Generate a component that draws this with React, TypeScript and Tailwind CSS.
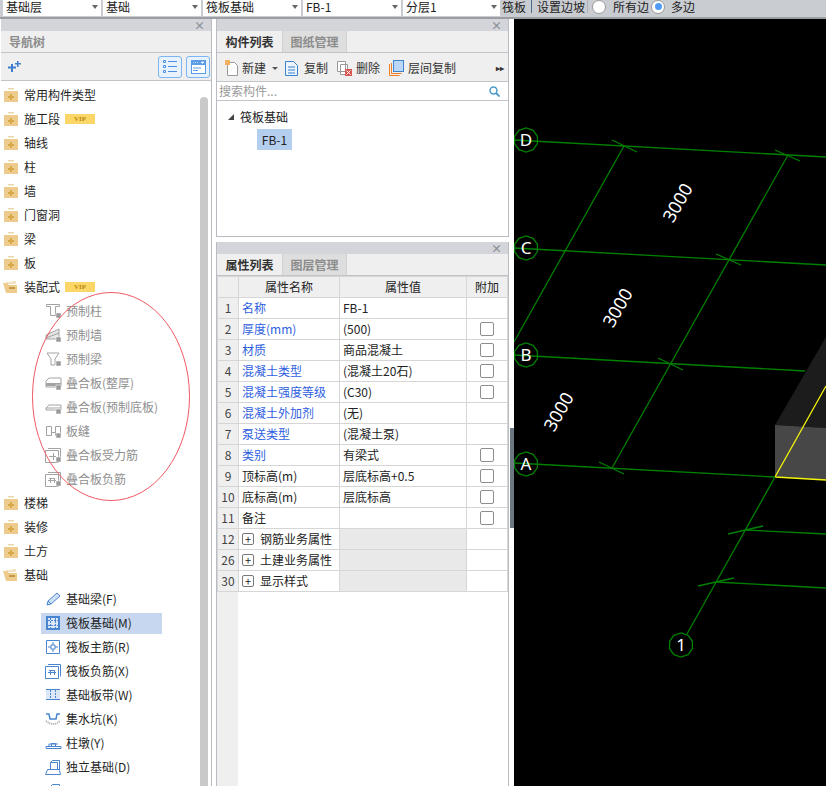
import React from "react";

const FONT = "font-['Noto_Sans_CJK_SC','Noto_Sans',sans-serif]";

type TreeRow = {
  label: string;
  kind: "closed" | "open" | "child";
  icon?: string;
  vip?: boolean;
  disabled?: boolean;
  selected?: boolean;
};

const treeRows: TreeRow[] = [
  { label: "常用构件类型", kind: "closed" },
  { label: "施工段", kind: "closed", vip: true },
  { label: "轴线", kind: "closed" },
  { label: "柱", kind: "closed" },
  { label: "墙", kind: "closed" },
  { label: "门窗洞", kind: "closed" },
  { label: "梁", kind: "closed" },
  { label: "板", kind: "closed" },
  { label: "装配式", kind: "open", vip: true },
  { label: "预制柱", kind: "child", icon: "column", disabled: true },
  { label: "预制墙", kind: "child", icon: "wall", disabled: true },
  { label: "预制梁", kind: "child", icon: "beam", disabled: true },
  { label: "叠合板(整厚)", kind: "child", icon: "slabFull", disabled: true },
  { label: "叠合板(预制底板)", kind: "child", icon: "slab", disabled: true },
  { label: "板缝", kind: "child", icon: "seam", disabled: true },
  { label: "叠合板受力筋", kind: "child", icon: "rebar", disabled: true },
  { label: "叠合板负筋", kind: "child", icon: "negRebar", disabled: true },
  { label: "楼梯", kind: "closed" },
  { label: "装修", kind: "closed" },
  { label: "土方", kind: "closed" },
  { label: "基础", kind: "open" },
  { label: "基础梁(F)", kind: "child", icon: "pencil" },
  { label: "筏板基础(M)", kind: "child", icon: "raft", selected: true },
  { label: "筏板主筋(R)", kind: "child", icon: "mainRebar" },
  { label: "筏板负筋(X)", kind: "child", icon: "negRebar" },
  { label: "基础板带(W)", kind: "child", icon: "strip" },
  { label: "集水坑(K)", kind: "child", icon: "pit" },
  { label: "柱墩(Y)", kind: "child", icon: "pier" },
  { label: "独立基础(D)", kind: "child", icon: "footing" },
  { label: "", kind: "child", icon: "footing" },
];

type PropRow = {
  no: number;
  name: string;
  value?: string;
  blue?: boolean;
  check?: boolean;
  group?: boolean;
};

const propRows: PropRow[] = [
  { no: 1, name: "名称", value: "FB-1", blue: true },
  { no: 2, name: "厚度(mm)", value: "(500)", blue: true, check: true },
  { no: 3, name: "材质", value: "商品混凝土", blue: true, check: true },
  { no: 4, name: "混凝土类型", value: "(混凝土20石)", blue: true, check: true },
  { no: 5, name: "混凝土强度等级", value: "(C30)", blue: true, check: true },
  { no: 6, name: "混凝土外加剂", value: "(无)", blue: true },
  { no: 7, name: "泵送类型", value: "(混凝土泵)", blue: true },
  { no: 8, name: "类别", value: "有梁式", blue: true, check: true },
  { no: 9, name: "顶标高(m)", value: "层底标高+0.5", check: true },
  { no: 10, name: "底标高(m)", value: "层底标高", check: true },
  { no: 11, name: "备注", check: true },
  { no: 12, name: "钢筋业务属性", group: true },
  { no: 26, name: "土建业务属性", group: true },
  { no: 30, name: "显示样式", group: true },
];

function Folder({ open }: { open: boolean }) {
  if (open) {
    return (
      <svg className="-ml-px shrink-0" width="16" height="14" viewBox="0 0 16 14">
        <path d="M3 2h5l1-1h4v3H3z" fill="#f3e3c2" />
        <path d="M0 3h4l2 2h8v8H3z" fill="#eccb8c" />
        <rect x="6" y="7" width="6" height="2" fill="#c39a45" />
      </svg>
    );
  }
  return (
    <svg className="shrink-0" width="14" height="14" viewBox="0 0 14 14">
      <rect x="4" y="0" width="6" height="1.500" fill="#ead6ac" />
      <rect x="0" y="3" width="14" height="11" fill="#eccb8c" />
      <path d="M6 6h2v2h2v2H8v2H6v-2H4V8h2z" fill="#d6a84a" />
    </svg>
  );
}

function ChildIcon({ name, c }: { name: string; c: string }) {
  const s = { fill: "none", stroke: c, strokeWidth: 1 };
  return (
    <svg width="17" height="16" viewBox="0 0 17 16">
      {name === "column" && <path d="M1.500 1.500h13v2H10.500v9h-5v-9H1.500z" {...s} />}
      {name === "wall" && <path d="M1 8l13-6v10H1zM1 11l13-5" {...s} fill="#e6e6e6" />}
      {name === "beam" && <path d="M2 2h12L10 8v6H6V8z" {...s} />}
      {name === "slabFull" && (
        <>
          <path d="M1 6l3-3h12v9H1z" {...s} />
          <rect x="1" y="8" width="15" height="3" fill={c} />
        </>
      )}
      {name === "slab" && <path d="M1 9l3-3h12v5H1zM1 9h15" {...s} />}
      {name === "seam" && <path d="M1.500 3.500h5v9h-5zM10.500 3.500h5v9h-5zM6.500 9.500h4" {...s} />}
      {name === "rebar" && <path d="M.5 3.500h13v12H.5zM3 1.500h12.500v12M4 9.500h7M8.500 6v7" {...s} />}
      {name === "negRebar" && <path d="M.5 3.500h13v12H.5zM3 1.500h12.500v12M4 7.500h6M5.500 7v5M9.500 7v5M3 9.500h8" {...s} />}
      {name === "pencil" && <path d="M2 14l1-4 9-8 3 3-9 8zM3 10l3 3" {...s} fill="#cfe0f5" />}
      {name === "raft" && (
        <>
          <rect x="1" y="1" width="14" height="14" fill={c} />
          <rect x="3" y="3" width="10" height="10" fill="#dce8f7" />
          <path d="M5.500 3v10M10.500 3v10M3 5.500h10M3 10.500h10" {...s} strokeDasharray="2 1" />
        </>
      )}
      {name === "mainRebar" && <path d="M1.500 1.500h13v13h-13zM8 3v3M8 10v3M3 8h3M10 8h3M6 6h4v4H6z" {...s} />}
      {name === "strip" && (
        <>
          <rect x="1" y="2" width="14" height="11" fill="#dce8f7" />
          <path d="M1 2.500h14M1 12.500h14" {...s} />
          <path d="M5.500 3v9M10.500 3v9" {...s} strokeDasharray="2 1" />
        </>
      )}
      {name === "pit" && (
        <>
          <path d="M1 3h3l1 5h6l1-5h3" {...s} strokeWidth={1.5} />
          <path d="M1 10q7 6 14 0" {...s} stroke="#a8a8a8" strokeDasharray="1 1" strokeWidth={2} />
        </>
      )}
      {name === "pier" && <path d="M1 11.500h15v2H1zM6.500 11.500v-3h4v3M4 11V9h9" {...s} />}
      {name === "footing" && <path d="M.5 15.500l2-5h3v-7l2-2h7v10l1 4zM5.500 10.500h9M5.500 3.500h7v7" {...s} />}
      {c === "#a3a3a3" && (
        <rect x="11" y="10" width="5" height="5" fill="#9a9a9a" stroke="#fff" strokeWidth="0.5" />
      )}
    </svg>
  );
}

function NavTree() {
  return (
    <div className="flex min-h-0 flex-1 bg-white">
      <div className="min-w-0 flex-1 overflow-hidden pt-[2px]">
        {treeRows.map((row, i) =>
          row.kind === "child" ? (
            <div key={i} className="flex h-6 items-center pl-10">
              <div
                className={`flex h-[21px] w-[121px] items-center pl-1 ${row.selected ? "bg-[#c6d7ef]" : ""}`}
              >
                <ChildIcon name={row.icon ?? ""} c={row.disabled ? "#a3a3a3" : "#4a86d0"} />
                <span className={`ml-1 whitespace-nowrap text-xs ${row.disabled ? "text-[#8f8f8f]" : "text-[#1f1f1f]"}`}>
                  {row.label}
                </span>
              </div>
            </div>
          ) : (
            <div key={i} className="flex h-6 items-center pl-[3px]">
              <div className="flex w-[15px]">
                <Folder open={row.kind === "open"} />
              </div>
              <span className="ml-[5px] text-xs text-[#1f1f1f]">{row.label}</span>
              {row.vip && (
                <span className="ml-[5px] flex h-[10px] w-[30px] items-center justify-center bg-[#fcd768] font-['Liberation_Serif',serif] text-[7px] font-bold text-[#b98a10]">
                  VIP
                </span>
              )}
            </div>
          ),
        )}
      </div>
      <div className="mr-[3px] mt-4 w-2 rounded-t bg-[#c9c9c9]" />
    </div>
  );
}

function PanelTitle() {
  return (
    <div className="flex h-3 items-center justify-end bg-[#d3d5da] pr-[6px] text-[11px] leading-none font-bold text-[#8d9096]">
      ×
    </div>
  );
}

function Tabs({ active, other }: { active: string; other: string }) {
  return (
    <div className="flex h-[22px] border-b border-[#c2c4ca] bg-[#efefef]">
      <div className="flex w-[65px] items-center justify-center text-xs font-semibold text-[#333]">{active}</div>
      <div className="flex w-[65px] items-center justify-center border-x border-[#d0d0d0] bg-[#dedede] text-xs font-semibold text-[#8c8c8c]">
        {other}
      </div>
    </div>
  );
}

function Toolbar() {
  return (
    <div className="flex h-[29px] items-center border-b border-[#c2c4ca] bg-[#efefef] pl-[7px] pr-[3px] pt-[2px] text-xs text-[#333]">
      <svg width="16" height="16" viewBox="0 0 16 16">
        <path d="M3.500 2.500h7l3 3v10h-10z" fill="#fff" stroke="#9a9a9a" />
        <rect x="1" y="0" width="5" height="5" fill="#f4b060" />
      </svg>
      <span className="ml-[2px]">新建</span>
      <span className="ml-[6px] mt-[1px] h-0 w-0 border-x-[3px] border-t-[3px] border-x-transparent border-t-[#555]" />
      <svg className="ml-[7px]" width="13" height="16" viewBox="0 0 13 16">
        <path d="M.5 1.500h8l4 4v10H.5zM3 7h7M3 10h7M3 13h7" fill="#eef4fc" stroke="#3b82cf" />
      </svg>
      <span className="ml-[6px]">复制</span>
      <svg className="ml-[9px]" width="15" height="16" viewBox="0 0 15 16">
        <path d="M.5 1.500h8v10h-8zM3.500 4.500h7v10h-7z" fill="#fff" stroke="#9a9a9a" />
        <rect x="8" y="9" width="7" height="7" fill="#d9534f" />
        <path d="M9.500 10.500l4 4M13.500 10.500l-4 4" stroke="#fff" />
      </svg>
      <span className="ml-[4px]">删除</span>
      <svg className="ml-[9px]" width="15" height="16" viewBox="0 0 15 16">
        <path d="M.5 4v11.500h10" fill="none" stroke="#ef7d22" />
        <path d="M2.500 3v10.500h10" fill="none" stroke="#ef7d22" />
        <rect x="4.500" y=".5" width="10" height="11" fill="#bcd6f7" stroke="#3b82cf" />
      </svg>
      <span className="ml-[4px]">层间复制</span>
      <span className="ml-auto mr-[1px] text-[8px] font-bold text-[#333]">▸▸</span>
    </div>
  );
}

function Cell({ className, children }: { className: string; children?: React.ReactNode }) {
  return <td className={`border border-[#d6d6d6] p-0 ${className}`}>{children}</td>;
}

function PropTable() {
  return (
    <div className="relative min-h-0 flex-1 bg-white">
      <div className="absolute bottom-0 left-0 top-0 w-[21px] bg-[#efefef]" />
      <table className="relative w-[290px] table-fixed border-collapse text-xs text-[#222]">
        <colgroup>
          <col className="w-[21px]" />
          <col className="w-[101px]" />
          <col className="w-[127px]" />
          <col className="w-[41px]" />
        </colgroup>
        <tbody>
          <tr className="h-[21px] bg-[#efefef] text-center">
            <Cell className="" />
            <Cell className="">属性名称</Cell>
            <Cell className="">属性值</Cell>
            <Cell className="">附加</Cell>
          </tr>
          {propRows.map((row) => (
            <tr key={row.no} className="h-[21px]">
              <Cell className="bg-[#efefef] text-center text-[#444]">{row.no}</Cell>
              <Cell className={`pl-[3px] whitespace-nowrap ${row.blue ? "text-[#2f5fe0]" : ""}`}>
                {row.group ? (
                  <span className="flex items-center">
                    <span className="flex h-[12px] w-[12px] items-center justify-center rounded-[2px] border border-[#777] text-[11px] leading-none">
                      +
                    </span>
                    <span className="ml-[6px]">{row.name}</span>
                  </span>
                ) : (
                  row.name
                )}
              </Cell>
              <Cell className={`pl-[3px] ${row.group ? "bg-[#e9e9e9]" : ""}`}>{row.value}</Cell>
              <Cell className="">
                {row.check && <div className="mx-auto h-[14px] w-[14px] rounded-[2px] border border-[#8d8d8d] bg-white" />}
              </Cell>
            </tr>
          ))}
        </tbody>
      </table>
    </div>
  );
}

function Dropdown({ label, w }: { label: string; w: string }) {
  return (
    <div className={`flex h-[16px] ${w} items-center justify-between bg-white pb-[3px] pl-[3px] pr-[3px] text-xs leading-none text-[#222]`}>
      <span>{label}</span>
      <span className="h-0 w-0 border-x-[3px] border-t-[4px] border-x-transparent border-t-[#666]" />
    </div>
  );
}

function Radio({ on }: { on?: boolean }) {
  return (
    <span className="flex h-[14px] w-[14px] items-center justify-center rounded-full border border-[#9a9a9a] bg-white">
      {on && <span className="h-[7px] w-[7px] rounded-full bg-[#4f9bf5]" />}
    </span>
  );
}

function TopBar() {
  return (
    <div className="flex h-[19px] items-start gap-[2px] border-b-2 border-[#9b9ea3] bg-[#c9ccd1] pl-[3px]">
      <Dropdown label="基础层" w="w-[98px]" />
      <Dropdown label="基础" w="w-[98px]" />
      <Dropdown label="筏板基础" w="w-[98px]" />
      <Dropdown label="FB-1" w="w-[98px]" />
      <Dropdown label="分层1" w="w-[97px]" />
      <div className="flex h-[13px] items-center text-xs leading-none text-[#222]">
        <span>筏板</span>
        <span className="ml-[5px] mr-[5px] h-[13px] w-px bg-[#4a6a8a]" />
        <span>设置边坡</span>
        <span className="ml-[2px] mr-[4px] h-[13px] w-px bg-[#aeb1b6]" />
        <Radio />
        <span className="ml-[7px] mr-[2px]">所有边</span>
        <Radio on />
        <span className="ml-[6px]">多边</span>
      </div>
    </div>
  );
}

function GridBubble({ x, y, label }: { x: number; y: number; label: string }) {
  const r = 12;
  const pts = Array.from({ length: 10 }, (_, i) => {
    const a = (Math.PI / 10) * (2 * i + 1);
    return `${x + r * Math.cos(a)},${y + r * Math.sin(a)}`;
  }).join(" ");
  return (
    <>
      <polygon points={pts} fill="none" stroke="#008000" strokeWidth="1.3" />
      <text x={x} y={y + 6} textAnchor="middle" fontSize="17" fill="#fff" fontFamily="'Noto Sans',sans-serif">
        {label}
      </text>
    </>
  );
}

function Canvas() {
  const lines = [
    [514, 140, 826, 157],
    [514, 248, 826, 265],
    [514, 355, 805, 371],
    [514, 463, 775, 477],
    [745, 530, 826, 534],
    [716, 582, 826, 588],
    [514, 342, 624, 146],
    [612, 468, 788, 155],
    [687, 634, 775, 477],
    [612, 140, 637, 152],
    [775, 150, 800, 161],
    [716, 254, 741, 265],
    [658, 358, 683, 370],
    [599, 462, 624, 474],
    [728, 534, 763, 526],
    [698, 586, 734, 578],
  ];
  const labels = [
    [678, 203],
    [618, 308],
    [559, 412],
  ];
  return (
    <div className="min-w-0 flex-1 bg-black">
      <svg width="312" height="767" viewBox="514 19 312 767" className="block">
        <polygon points="775,425 826,337 826,428" fill="#1c1c1c" />
        <polygon points="775,425 826,428 826,480 775,477" fill="#474747" />
        <path d="M775 477L826 386M775 477L826 480" stroke="#f5f50a" strokeWidth="1.3" fill="none" />
        {lines.map((l, i) => (
          <line key={i} x1={l[0]} y1={l[1]} x2={l[2]} y2={l[3]} stroke="#008000" strokeWidth="1.3" />
        ))}
        {labels.map((p, i) => (
          <text
            key={i}
            x={p[0]}
            y={p[1] + 6}
            textAnchor="middle"
            fontSize="18"
            fill="#fff"
            fontFamily="'Noto Sans',sans-serif"
            transform={`rotate(-60 ${p[0]} ${p[1]})`}
          >
            3000
          </text>
        ))}
        <GridBubble x={526} y={140} label="D" />
        <GridBubble x={526} y={248} label="C" />
        <GridBubble x={526} y={355} label="B" />
        <GridBubble x={526} y={464} label="A" />
        <GridBubble x={681} y={645} label="1" />
      </svg>
    </div>
  );
}

export default function App() {
  return (
    <div className={`relative flex h-screen w-full flex-col overflow-hidden bg-white ${FONT}`}>
      <TopBar />
      <div className="flex min-h-0 flex-1">
        {/* 导航树 */}
        <div className="ml-px flex w-[211px] flex-col border-r border-[#b9bcc2]">
          <PanelTitle />
          <div className="flex h-[22px] items-center border-b border-[#c2c4ca] bg-[#efefef] pl-2 text-xs font-semibold text-[#8c8c8c]">
            导航树
          </div>
          <div className="flex h-[28px] items-center border-b border-[#c2c4ca] bg-[#efefef] pl-[7px] pr-px">
            <svg width="13" height="11" viewBox="0 0 13 11">
              <path d="M3 3h2v2.500h3V7.500H5V11H3V7.500H0V5.500h3zM9 0h1.500v2H13v1.500h-2.500V6H9V3.500H7V2h2z" fill="#3f7fcf" />
            </svg>
            <div className="ml-auto flex gap-[4px]">
              <div className="flex h-[22px] w-6 items-center justify-center rounded-[3px] border border-[#7cb5f0] bg-[#e8f2fc]">
                <svg width="14" height="13" viewBox="0 0 14 13">
                  <path d="M.5.5h2v2h-2zM.5 5.500h2v2h-2zM.5 10.500h2v2h-2zM5 1.500h9M5 6.500h9M5 11.500h9" stroke="#4a90e2" fill="none" />
                </svg>
              </div>
              <div className="flex h-[22px] w-6 items-center justify-center rounded-[3px] border border-[#7cb5f0] bg-[#e8f2fc]">
                <svg width="15" height="14" viewBox="0 0 15 14">
                  <rect width="15" height="14" fill="#5b9ce6" />
                  <rect x="1" y="5" width="13" height="8" fill="#fff" />
                  <path d="M2 8h8M2 10.500h5" stroke="#5b9ce6" />
                  <path d="M2 2.500h1M4 2.500h1M6 2.500h1M10 2h3l-1.500 1.500z" stroke="#fff" fill="#fff" strokeWidth=".6" />
                </svg>
              </div>
            </div>
          </div>
          <NavTree />
        </div>

        {/* 构件列表 / 属性列表 */}
        <div className="ml-1 flex w-[293px] flex-col gap-[5px]">
          <div className="flex h-[218px] flex-col border-x border-b border-[#b9bcc2]">
            <PanelTitle />
            <Tabs active="构件列表" other="图纸管理" />
            <Toolbar />
            <div className="flex h-[19px] items-center justify-between border-b border-[#c2c4ca] bg-white pl-[2px] pr-[8px] text-xs text-[#9a9a9a]">
              <span>搜索构件...</span>
              <svg width="11" height="11" viewBox="0 0 11 11">
                <circle cx="4.500" cy="4.500" r="3.500" fill="none" stroke="#4a9bc9" strokeWidth="1.500" />
                <path d="M7 7l3.500 3.500" stroke="#4a9bc9" strokeWidth="1.800" />
              </svg>
            </div>
            <div className="flex-1 bg-white pl-[11px] pt-1 text-xs text-[#222]">
              <div className="flex h-6 items-center">
                <span className="h-0 w-0 border-b-[6px] border-l-[6px] border-b-[#444] border-l-transparent" />
                <span className="ml-[6px]">筏板基础</span>
              </div>
              <div className="ml-[29px] flex h-[21px] w-[35px] items-center justify-center bg-[#b4cfee]">FB-1</div>
            </div>
          </div>
          <div className="flex min-h-0 flex-1 flex-col border-x border-[#b9bcc2]">
            <PanelTitle />
            <Tabs active="属性列表" other="图层管理" />
            <PropTable />
          </div>
        </div>

        {/* 分隔条 */}
        <div className="flex w-[5px] flex-col items-end bg-white pt-[409px]">
          <div className="h-[100px] w-[4px] bg-[#6d7884]" />
        </div>
        <Canvas />
      </div>

      {/* 红色圈注 */}
      <svg className="absolute left-[32px] top-[292px]" width="158" height="209" viewBox="0 0 158 209">
        <ellipse cx="79" cy="104.500" rx="78.500" ry="104" fill="none" stroke="#ef5a63" strokeWidth="1" />
      </svg>
    </div>
  );
}
